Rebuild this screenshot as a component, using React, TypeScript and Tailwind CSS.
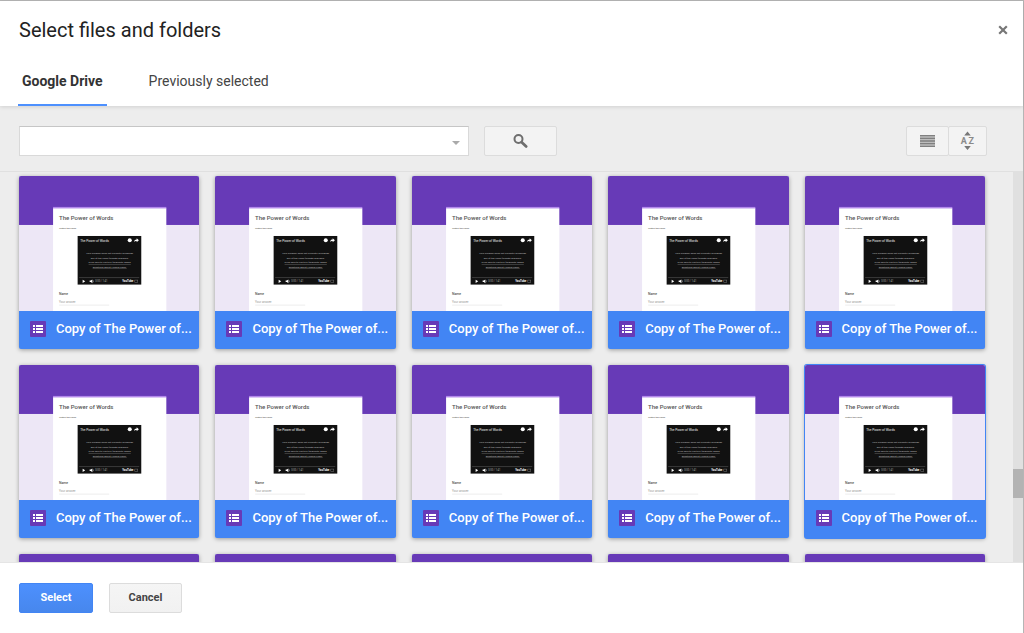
import { useState } from "react";
import clsx from "clsx";

// ─── Data ───────────────────────────────────────────────────────────────────

interface DriveFile {
  id: number;
  name: string;
}

const TABS = ["Google Drive", "Previously selected"];

const FILES: DriveFile[] = Array.from({ length: 15 }, (_, i) => ({
  id: i,
  name: "Copy of The Power of...",
}));

// ─── Icons ──────────────────────────────────────────────────────────────────

function SearchIcon() {
  return (
    <svg viewBox="0 0 16 16" className="size-4" fill="none" stroke="#6e6e6e" aria-hidden="true">
      <circle cx="5.5" cy="6" r="4" strokeWidth="2" />
      <path d="M8.700 9.200 13.200 13.400" strokeWidth="2.800" strokeLinecap="round" />
    </svg>
  );
}

function ListViewIcon() {
  return (
    <svg viewBox="0 0 15 12" className="h-3 w-[15px]" aria-hidden="true">
      <path fill="#bdbdbd" d="M0 0h15v12H0z" />
      <path
        stroke="#808080"
        strokeWidth="1.300"
        d="M0 .7h15M0 3.300h15M0 6h15M0 8.700h15M0 11.300h15"
      />
    </svg>
  );
}

function SortIcon() {
  return (
    <svg viewBox="0 0 16 20" className="h-5 w-4" fill="#777" aria-hidden="true">
      <path d="M7.500 .5 10.800 4.500H4.200zM7.500 19 4.200 15h6.600z" />
      <g fontSize="9" fontWeight="700" fill="#8a8a8a" textAnchor="middle">
        <text x="3.800" y="13">A</text>
        <text x="11.300" y="13">Z</text>
      </g>
    </svg>
  );
}

function CloseIcon() {
  return (
    <svg viewBox="0 0 10 10" className="size-[10px]" stroke="#777" strokeWidth="2.200" aria-hidden="true">
      <path d="M1.200 1.200 8.800 8.800M8.800 1.200 1.200 8.800" />
    </svg>
  );
}

function FormIcon() {
  return (
    <svg viewBox="0 0 16 16" className="size-4 shrink-0" aria-hidden="true">
      <rect width="16" height="16" rx="1" fill="#673ab7" />
      <path
        fill="#fff"
        d="M3 4h2v2H3zM3 7h2v2H3zM3 10h2v2H3zM6 4h7v2H6zM6 7h7v2H6zM6 10h7v2H6z"
      />
    </svg>
  );
}

// Small preview of the form: purple banner, paper sheet and embedded video
function FormThumbnail() {
  return (
    <svg
      viewBox="0 0 180 135"
      preserveAspectRatio="xMidYMid slice"
      className="block h-[135px] w-full font-[Roboto,sans-serif]"
      aria-hidden="true"
    >
      <rect x="-20" width="220" height="135" fill="#ede7f6" />
      <rect x="-20" width="220" height="49" fill="#673ab7" />
      <rect x="34" y="31" width="113" height="2" fill="#b388eb" />
      <rect x="34" y="32.500" width="113" height="103" fill="#fff" />
      <text x="40" y="44.500" fontSize="6" fontWeight="500" fill="#555">The Power of Words</text>
      <text x="40" y="52.800" fontSize="2.400" fill="#444">Watch the video.</text>

      <rect x="58.500" y="60" width="63.500" height="48.500" fill="#111" />
      <text x="61" y="65.600" fontSize="3.200" fill="#eee">The Power of Words</text>
      <circle cx="110.500" cy="64.300" r="2" fill="#fff" />
      <path d="M114.800 66c.3-2 1.300-2.600 2.600-2.600v-1.100l2.200 2-2.200 1.900V65c-1.200 0-2 .2-2.600 1z" fill="#fff" />
      <g fontSize="2.500" fill="#bbb" textAnchor="middle">
        <text x="90.500" y="78.300">Your browser does not currently recognize</text>
        <text x="90.500" y="82.700">any of the video formats available.</text>
        <text x="90.500" y="87.100" textDecoration="underline">Click here to visit our frequently asked</text>
        <text x="90.500" y="91.500" textDecoration="underline">questions about HTML5 video.</text>
      </g>
      <path d="M60 101.500h60" stroke="#555" strokeWidth=".6" />
      <path d="M63.500 103.600v3.200l2.600-1.600zM70.500 104.500h1.200l1.500-1.200v3.800l-1.500-1.200h-1.200z" fill="#fff" />
      <path d="M73.900 104.200q.8 1 0 2" stroke="#fff" strokeWidth=".4" fill="none" />
      <text x="76" y="106.200" fontSize="2.600" fill="#aaa">0:00 / 1:41</text>
      <text x="103" y="106.400" fontSize="2.800" fontWeight="700" fill="#fff">YouTube</text>
      <rect x="115.500" y="104" width="3" height="2.400" fill="none" stroke="#777" strokeWidth=".5" />

      <text x="40" y="118.600" fontSize="3.400" fill="#222">Name</text>
      <text x="40" y="126.500" fontSize="3" fill="#999">Your answer</text>
      <path d="M40 129h50" stroke="#e2e2e2" strokeWidth=".6" />
    </svg>
  );
}

// ─── Sub-components ─────────────────────────────────────────────────────────

interface FileCardProps {
  file: DriveFile;
  focused: boolean;
  onFocus: () => void;
}

function FileCard({ file, focused, onFocus }: FileCardProps) {
  return (
    <button
      type="button"
      onClick={onFocus}
      className={clsx(
        "block h-[173px] min-w-0 overflow-hidden rounded-xs bg-[#4285f4] text-left shadow-[0_1px_4px_rgba(0,0,0,0.35)] outline-none",
        focused && "ring-1 ring-[#4285f4]",
      )}
    >
      <FormThumbnail />
      <span className="flex h-[38px] items-center gap-[10px] pr-1 pb-[2px] pl-[11px]">
        <FormIcon />
        <span className="truncate text-[13px] leading-5 font-medium text-white">{file.name}</span>
      </span>
    </button>
  );
}

// ─── Main Component ─────────────────────────────────────────────────────────

export default function App() {
  const [tab, setTab] = useState(TABS[0]);
  const [focusedId, setFocusedId] = useState(9);
  const [query, setQuery] = useState("");

  return (
    <div className="flex h-screen flex-col border-t border-r border-[#b5b5b5] bg-white font-[Roboto,sans-serif] text-[#222]">
      {/* Header */}
      <header className="relative z-10 bg-white shadow-[0_1px_4px_rgba(0,0,0,0.12)]">
        <div className="flex items-center justify-between pt-4 pr-[15px] pl-[19px]">
          <h1 className="text-xl leading-[26px]">Select files and folders</h1>
          <button type="button" aria-label="Close">
            <CloseIcon />
          </button>
        </div>
        <nav className="mt-[13px] flex gap-[38px] pl-[18px]" role="tablist">
          {TABS.map((name) => (
            <button
              key={name}
              type="button"
              role="tab"
              aria-selected={tab === name}
              onClick={() => setTab(name)}
              className={clsx(
                "h-[50px] border-b-2 px-1 pt-[2px] text-sm",
                tab === name
                  ? "border-[#4d90fe] font-bold text-[#333]"
                  : "border-transparent text-[#444]",
              )}
            >
              {name}
            </button>
          ))}
        </nav>
      </header>

      {/* Search bar */}
      <div className="flex items-center border-b border-[#e0e0e0] bg-[#ededed] pt-5 pr-9 pb-[15px] pl-[19px]">
        <div className="relative w-[450px]">
          <input
            type="text"
            aria-label="Search files"
            value={query}
            onChange={(e) => setQuery(e.target.value)}
            className="block h-[30px] w-full border border-[#d9d9d9] border-t-[#c6c6c6] bg-white pr-7 pl-2 text-sm outline-none"
          />
          <span className="absolute top-[15px] right-[9px] border-x-4 border-t-4 border-x-transparent border-t-[#aaa]" />
        </div>
        <button
          type="button"
          aria-label="Search"
          className="ml-[15px] flex h-[30px] w-[73px] items-center justify-center rounded-xs border border-[#dcdcdc] bg-[#f3f3f3]"
        >
          <SearchIcon />
        </button>
        <div className="ml-auto flex">
          <button
            type="button"
            aria-label="List view"
            className="flex h-[30px] w-[43px] items-center justify-center rounded-xs border border-[#dcdcdc] bg-[#f3f3f3]"
          >
            <ListViewIcon />
          </button>
          <button
            type="button"
            aria-label="Sort options"
            className="-ml-px flex h-[30px] w-[39px] items-center justify-center rounded-xs border border-[#dcdcdc] bg-[#f3f3f3]"
          >
            <SortIcon />
          </button>
        </div>
      </div>

      {/* Files */}
      <main className="flex min-h-0 flex-1 bg-[#ededed]">
        <div className="grid flex-1 grid-cols-5 content-start gap-4 overflow-hidden pt-1 pr-7 pl-[19px]">
          {FILES.map((file) => (
            <FileCard
              key={file.id}
              file={file}
              focused={file.id === focusedId}
              onFocus={() => setFocusedId(file.id)}
            />
          ))}
        </div>
        <div className="flex w-[10px] flex-col bg-[#e0e0e0]" aria-hidden="true">
          <div className="grow-[297]" />
          <div className="h-[29px] bg-[#b3b3b3]" />
          <div className="grow-[64]" />
        </div>
      </main>

      {/* Actions */}
      <footer className="flex gap-4 border-t border-[#e5e5e5] bg-white pt-5 pb-5 pl-[19px]">
        <button
          type="button"
          className="h-[30px] w-[74px] rounded-xs border border-[#4285f4] bg-linear-to-b from-[#4d90fe] to-[#4787ed] text-[11px] font-bold text-white"
        >
          Select
        </button>
        <button
          type="button"
          className="h-[30px] w-[73px] rounded-xs border border-[#dcdcdc] bg-linear-to-b from-[#f5f5f5] to-[#f1f1f1] text-[11px] font-bold text-[#444]"
        >
          Cancel
        </button>
      </footer>
    </div>
  );
}
